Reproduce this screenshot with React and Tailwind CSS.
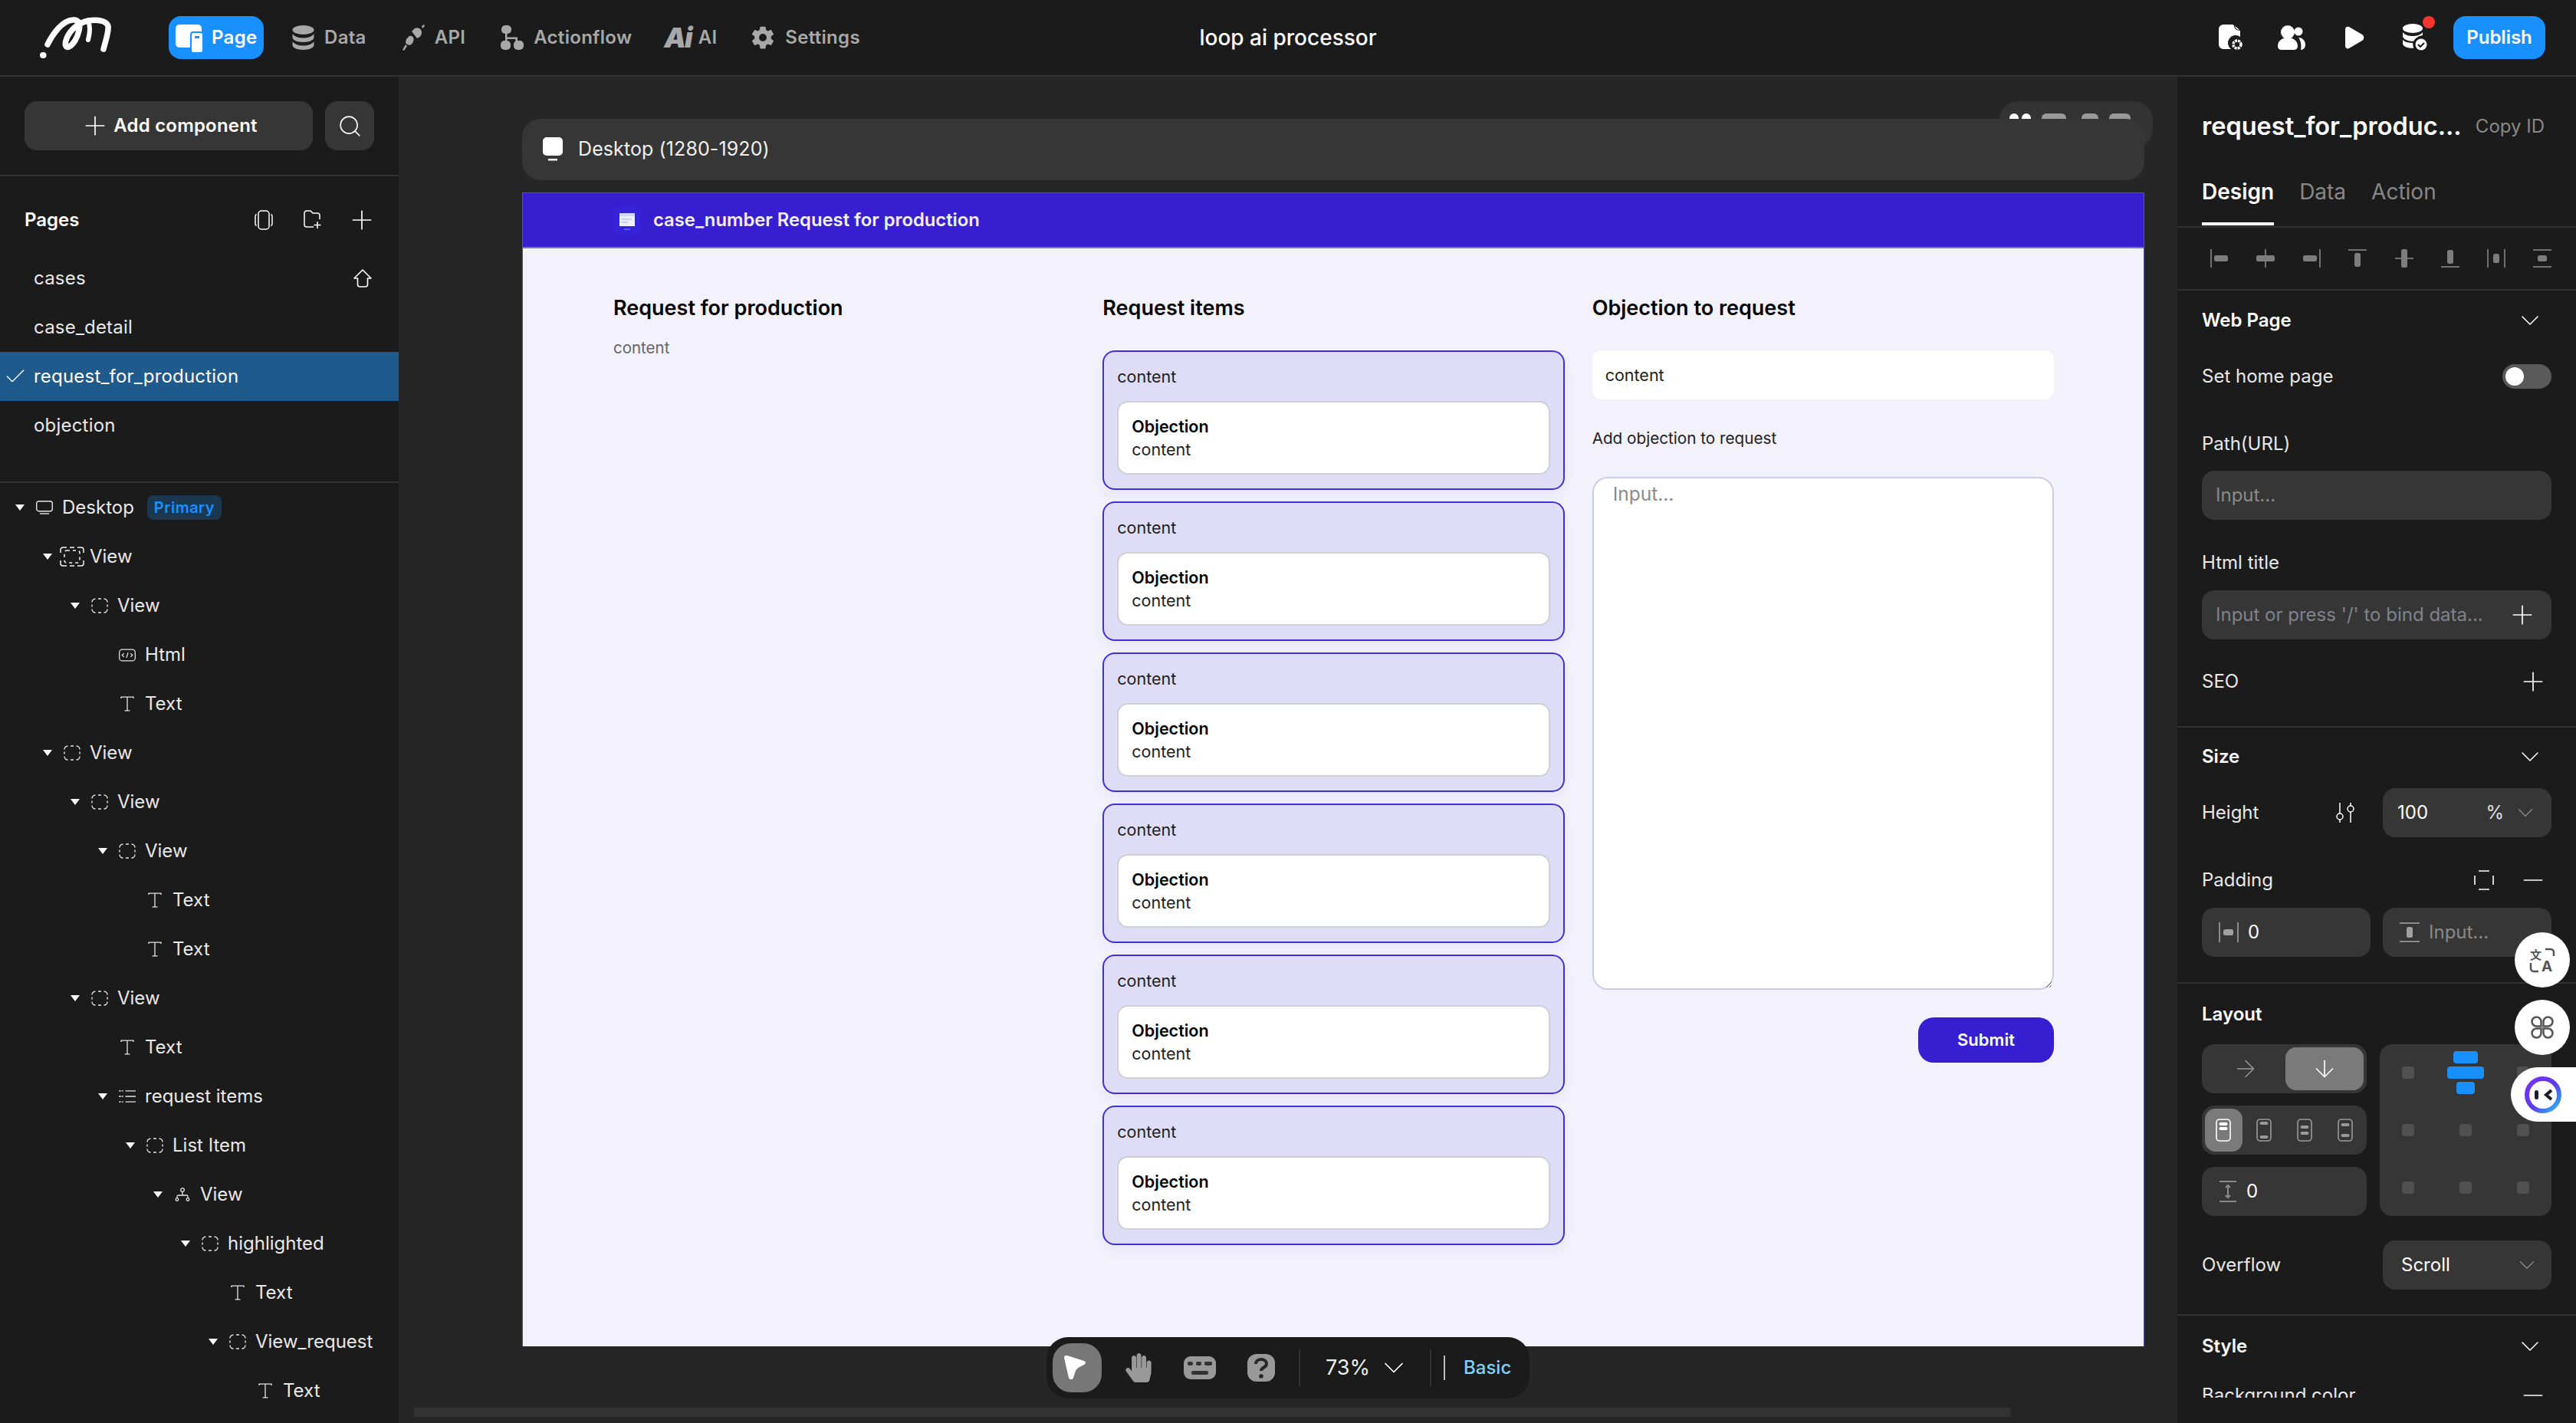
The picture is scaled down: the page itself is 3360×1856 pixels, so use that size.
import { Plus, Search, Check, ChevronDown, ArrowRight, ArrowDown, Minus } from 'lucide-react'
import { IoSettingsSharp } from 'react-icons/io5'
import { FaHandPaper } from 'react-icons/fa'

const pages = ['cases', 'case_detail', 'request_for_production', 'objection']

const tree = [
  { d: 0, icon: 'desktop', label: 'Desktop', arrow: true, badge: 'Primary' },
  { d: 1, icon: 'viewActive', label: 'View', arrow: true },
  { d: 2, icon: 'view', label: 'View', arrow: true },
  { d: 3, icon: 'html', label: 'Html' },
  { d: 3, icon: 'text', label: 'Text' },
  { d: 1, icon: 'view', label: 'View', arrow: true },
  { d: 2, icon: 'view', label: 'View', arrow: true },
  { d: 3, icon: 'view', label: 'View', arrow: true },
  { d: 4, icon: 'text', label: 'Text' },
  { d: 4, icon: 'text', label: 'Text' },
  { d: 2, icon: 'view', label: 'View', arrow: true },
  { d: 3, icon: 'text', label: 'Text' },
  { d: 3, icon: 'list', label: 'request items', arrow: true },
  { d: 4, icon: 'view', label: 'List Item', arrow: true },
  { d: 5, icon: 'branch', label: 'View', arrow: true },
  { d: 6, icon: 'view', label: 'highlighted', arrow: true },
  { d: 7, icon: 'text', label: 'Text' },
  { d: 7, icon: 'view', label: 'View_request', arrow: true },
  { d: 8, icon: 'text', label: 'Text' },
]

const TreeIcon = ({ type }) => {
  if (type === 'desktop')
    return (
      <svg width="22" height="18" viewBox="0 0 22 18" fill="none" stroke="#e5e5e5" strokeWidth="1.4">
        <rect x="0.7" y="0.7" width="20.6" height="13" rx="3" />
        <path d="M5 17h12" />
      </svg>
    )
  if (type === 'view')
    return (
      <svg width="22" height="20" viewBox="0 0 22 20" fill="none" stroke="#e5e5e5" strokeWidth="1.4">
        <path d="M1 5.5A4.5 4.5 0 0 1 5.5 1M9 1h4M16.5 1A4.5 4.5 0 0 1 21 5.5M21 8.5v3M21 14.5a4.5 4.5 0 0 1-4.5 4.5M13 19H9M5.5 19A4.5 4.5 0 0 1 1 14.5M1 11.5v-3" />
      </svg>
    )
  if (type === 'viewActive')
    return (
      <svg className="shrink-0" width="32" height="26" viewBox="0 0 32 26" fill="none" stroke="#f5f5f5" strokeWidth="1.5">
        <rect x="6" y="5" width="20" height="16" rx="3" strokeDasharray="4 4" />
        <path d="M1 8V4a3 3 0 0 1 3-3h5M23 1h5a3 3 0 0 1 3 3v4M31 18v4a3 3 0 0 1-3 3h-5M9 25H4a3 3 0 0 1-3-3v-4M13 1h6M13 25h6" />
      </svg>
    )
  if (type === 'html')
    return (
      <svg width="23" height="17" viewBox="0 0 23 17" fill="none" stroke="#e5e5e5" strokeWidth="1.3">
        <rect x="0.7" y="0.7" width="21.6" height="15.6" rx="4" />
        <path d="M7 6l-2.5 2.5L7 11M16 6l2.5 2.5L16 11M12.6 5l-2.2 7" />
      </svg>
    )
  if (type === 'text')
    return (
      <svg width="18" height="20" viewBox="0 0 18 20" fill="none" stroke="#e5e5e5" strokeWidth="1.3">
        <path d="M1 3V1.2h16V3M9 1.2v17.6M5.5 18.8h7" />
      </svg>
    )
  if (type === 'list')
    return (
      <svg width="23" height="18" viewBox="0 0 23 18" fill="none" stroke="#e5e5e5" strokeWidth="1.4">
        <path d="M0 1.5h6M0 9h6M0 16.5h6" strokeDasharray="3 1" />
        <path d="M9 1.5h14M9 9h14M9 16.5h14" />
      </svg>
    )
  return (
    <svg width="20" height="18" viewBox="0 0 20 18" fill="none" stroke="#e5e5e5" strokeWidth="1.3">
      <circle cx="10" cy="3" r="2.3" />
      <path d="M10 5.5V10M3 14v-2.5a1.5 1.5 0 0 1 1.5-1.5h11a1.5 1.5 0 0 1 1.5 1.5V14" />
      <circle cx="3" cy="15.5" r="1.8" />
      <circle cx="17" cy="15.5" r="1.8" />
    </svg>
  )
}

const TreeRow = ({ item }) => (
  <div className="flex h-16 items-center text-[24px] text-[#e8e8e8]" style={{ paddingLeft: 18 + item.d * 36 }}>
    <div className="flex w-4 justify-center">
      {item.arrow && <div className="h-0 w-0 border-x-[6px] border-t-[8px] border-x-transparent border-t-white" />}
    </div>
    <div className="ml-[13px] flex w-[22px] justify-center">
      <TreeIcon type={item.icon} />
    </div>
    <span className="ml-3">{item.label}</span>
    {item.badge && (
      <span className="ml-[17px] flex h-8 items-center rounded-lg bg-[#1c3850] px-[9px] text-[20px] font-semibold tracking-[0.5px] text-[#1890ff]">{item.badge}</span>
    )}
  </div>
)

const NavItem = ({ icon, label, className }) => (
  <div className={`flex items-center gap-[13px] text-[24px] font-semibold tracking-[0.3px] text-[#a8a8a8] ${className}`}>
    {icon}
    <span>{label}</span>
  </div>
)

const AlignIcon = ({ kind }) => {
  const bar = '#7d7d7d'
  const line = '#707070'
  const shapes = {
    left: [[2, 2, 2, 24], [7, 10, 18, 8]],
    hcenter: [[13, 2, 2, 24], [2, 10, 24, 8]],
    right: [[24, 2, 2, 24], [3, 10, 18, 8]],
    top: [[2, 2, 24, 2], [10, 7, 8, 18]],
    vcenter: [[2, 13, 24, 2], [10, 2, 8, 24]],
    bottom: [[2, 24, 24, 2], [10, 3, 8, 18]],
    hdist: [[2, 2, 2, 24], [24, 2, 2, 24], [10, 8, 8, 12]],
    vdist: [[2, 2, 24, 2], [2, 24, 24, 2], [8, 10, 12, 8]],
  }
  const list = shapes[kind]
  return (
    <svg width="28" height="28" viewBox="0 0 28 28">
      {list.map((r, i) => {
        const isBar = i === list.length - 1
        return <rect key={i} x={r[0]} y={r[1]} width={r[2]} height={r[3]} rx={isBar ? 2.5 : 0} fill={isBar ? bar : line} />
      })}
    </svg>
  )
}

const SectionHead = ({ title, height }) => (
  <div className={`flex items-center justify-between pr-2 ${height}`}>
    <span className="text-[24px] font-semibold text-white">{title}</span>
    <ChevronDown size={40} strokeWidth={0.9} />
  </div>
)

const Field = ({ children, className = '' }) => (
  <div className={`flex h-16 items-center rounded-2xl bg-[#363636] text-[24px] ${className}`}>{children}</div>
)

const JustifyIcon = ({ bars, active }) => {
  const c = active ? '#fff' : '#9a9a9a'
  return (
    <svg width="20" height="30" viewBox="0 0 20 30" fill="none">
      <rect x="1" y="1" width="18" height="28" rx="4" stroke={c} strokeWidth="1.6" />
      {bars.map((y) => (
        <rect key={y} x="4.5" y={y} width="11" height="4" rx="2" fill={c} />
      ))}
    </svg>
  )
}

const RequestCard = () => (
  <div className="h-[182px] rounded-2xl border-2 border-[#4030dc] bg-[#dfdcf7] px-[17px] shadow-[0_8px_16px_rgba(90,80,200,0.06)]">
    <p className="flex h-[64px] items-center text-[21.5px] text-[#222]">content</p>
    <div className="h-[96px] rounded-[14px] border-2 border-[#d0d0d4] bg-white px-[17px] pt-4 text-[21.5px] leading-[30px]">
      <p className="font-semibold text-black">Objection</p>
      <p className="text-[#222]">content</p>
    </div>
  </div>
)

const Logo = () => (
  <svg width="94" height="54" viewBox="0 0 94 54" fill="none" stroke="#fff" strokeLinecap="round" strokeLinejoin="round">
    <path d="M5 50h.5" strokeWidth="8" />
    <path d="M11 36C18 22 30 5 44 4c8-1 10 6 8 14-2 9-7 18-13 21-5 2-6-4-3-11 4-10 14-20 28-23 12-2 24 0 26 7 1 8-3 18-6 30" strokeWidth="7.5" />
    <path d="M64 6c3 6 2 16 0 24" strokeWidth="6" />
  </svg>
)

export default function App() {
  return (
    <div className="flex h-screen w-screen flex-col overflow-hidden bg-[#1b1b1b] font-['Inter',sans-serif] text-white">
      <header className="relative flex h-[100px] shrink-0 items-center border-b-2 border-[#333]">
        <div className="ml-[51px] w-[169px]">
          <Logo />
        </div>
        <div className="flex h-14 w-[124px] items-center gap-[11px] rounded-2xl bg-[#1890ff] pl-[9px] text-[24px] font-semibold tracking-[0.3px]">
          <svg width="36" height="40" viewBox="0 0 36 40" fill="#fff">
            <rect x="0" y="3" width="34" height="30" rx="5" />
            <rect x="20" y="13" width="16" height="27" rx="3" stroke="#1890ff" strokeWidth="2" />
            <rect x="25" y="18" width="6" height="3" fill="#1890ff" />
          </svg>
          <span>Page</span>
        </div>
        <NavItem
          className="ml-[37px]"
          label="Data"
          icon={
            <svg width="29" height="32" viewBox="0 0 29 32" fill="#a8a8a8">
              <ellipse cx="14.5" cy="6" rx="14" ry="6" />
              <path d="M.5 11c3 4 8 5.5 14 5.5S25.5 15 28.5 11v5c0 3-6 6-14 6S.5 19 .5 16zM.5 21c3 4 8 5.5 14 5.5s11-1.5 14-5.5v5c0 3-6 6-14 6s-14-3-14-6z" />
            </svg>
          }
        />
        <NavItem
          className="ml-[46px]"
          label="API"
          icon={
            <svg width="30" height="34" viewBox="0 0 30 34" fill="#a8a8a8">
              <path d="M15 7c3-4 8-3 10 0s1 8-3 10l-2 1-7-9zM26 2l3-2 1 2-3 3zM10 15c4-1 7 3 5 7-1 4-5 6-8 4l-2-2 1-5z" />
              <path d="M5 26l-4 7 2 1 4-6z" />
            </svg>
          }
        />
        <NavItem
          className="ml-[46px]"
          label="Actionflow"
          icon={
            <svg width="30" height="32" viewBox="0 0 30 32" fill="#a8a8a8">
              <rect x="1" y="0" width="13" height="11" rx="5" />
              <rect x="0" y="20" width="13" height="12" rx="5" />
              <rect x="17" y="20" width="13" height="12" rx="5" />
              <path d="M6 10h2.5v5.5H22V21h-2.5v-3H8.5v3H6z" />
            </svg>
          }
        />
        <div className="ml-[42px] flex items-center gap-[9px] text-[24px] font-semibold tracking-[0.3px] text-[#a8a8a8]">
          <span className="text-[36px] leading-none font-black tracking-[-2px] italic">Ai</span>
          <span>AI</span>
        </div>
        <NavItem className="ml-[44px]" label="Settings" icon={<IoSettingsSharp size={32} />} />
        <div className="absolute top-[35px] left-0 w-full text-center text-[28px] leading-7 font-medium">loop ai processor</div>
        <div className="ml-auto flex items-center pr-10">
          <svg width="32" height="34" viewBox="0 0 32 34" fill="#fff">
            <path d="M6 0h12l2 1c0 4 3 7 8 7v8a10 10 0 0 0-12 16H6a6 6 0 0 1-6-6V6a6 6 0 0 1 6-6z" />
            <path d="M21 2c2 1 4 3 6 5-3 0-5-2-6-5z" />
            <circle cx="24" cy="26" r="5" fill="none" stroke="#fff" strokeWidth="3.5" strokeDasharray="3 1" />
          </svg>
          <svg className="ml-[45px]" width="36" height="32" viewBox="0 0 36 32" fill="#fff">
            <circle cx="13" cy="9" r="9" />
            <circle cx="27" cy="8" r="5.5" />
            <path d="M0 27c0-7 6-11 13-11s13 4 13 11c0 3-2 5-5 5H5c-3 0-5-2-5-5zM27 16c5 0 9 4 9 9 0 4-2 7-6 7 1-6 0-12-3-16z" />
          </svg>
          <svg className="ml-[51px]" width="26" height="30" viewBox="0 0 26 30" fill="#fff">
            <path d="M1 4c0-3 3-4 5-3l17 10c3 2 3 6 0 8L6 29c-2 1-5 0-5-3z" />
          </svg>
          <div className="relative ml-[49px]">
            <svg width="34" height="36" viewBox="0 0 34 36" fill="#fff">
              <ellipse cx="14" cy="6" rx="13" ry="6" />
              <path d="M1 11c3 4 8 5 13 5s10-1 13-5v4c-6 1-10 4-12 8-7 0-14-3-14-7zM1 21c3 3 8 4 13 4l1 7c-8 0-14-3-14-6z" />
              <circle cx="25" cy="27" r="7.5" />
              <path d="M21 27l3 3 5-5" stroke="#1b1b1b" strokeWidth="2" fill="none" />
            </svg>
            <div className="absolute top-[-10px] left-[27px] h-4 w-4 rounded-full bg-[#f5352e]" />
          </div>
          <div className="ml-[33px] flex h-14 w-[120px] items-center justify-center rounded-2xl bg-[#1890ff] text-[24px] font-semibold">Publish</div>
        </div>
      </header>

      <div className="flex min-h-0 flex-1">
        {/* left panel */}
        <aside className="w-[520px] shrink-0 overflow-hidden">
          <div className="flex gap-4 border-b-2 border-[#333] p-8 pr-8">
            <div className="flex h-16 w-[376px] items-center justify-center gap-1 rounded-2xl bg-[#363636] text-[24px] font-semibold tracking-[0.2px]">
              <Plus size={40} strokeWidth={1} />
              <span>Add component</span>
            </div>
            <div className="flex h-16 w-16 items-center justify-center rounded-2xl bg-[#363636]">
              <Search size={33} strokeWidth={1.1} />
            </div>
          </div>
          <div className="border-b-2 border-[#333] pt-[25px] pb-[41px]">
            <div className="mb-3 flex h-16 items-center pr-4 pl-8">
              <span className="flex-1 text-[24px] font-semibold">Pages</span>
              <div className="flex w-16 justify-center">
                <svg width="24" height="26" viewBox="0 0 24 26" fill="none" stroke="#fff" strokeWidth="1.5">
                  <rect x="5" y="1" width="14" height="24" rx="4" />
                  <path d="M2.5 5.5a3 3 0 0 0-1.5 2.5v10a3 3 0 0 0 1.5 2.5M21.5 5.5a3 3 0 0 1 1.5 2.5v10a3 3 0 0 1-1.5 2.5" />
                </svg>
              </div>
              <div className="flex w-16 justify-center">
                <svg width="24" height="26" viewBox="0 0 24 26" fill="none" stroke="#fff" strokeWidth="1.5">
                  <path d="M13 22H4a3 3 0 0 1-3-3V4a3 3 0 0 1 3-3h5l3 3h6a3 3 0 0 1 3 3v5M18 15v9M13.5 19.5h9" />
                </svg>
              </div>
              <div className="flex w-16 justify-center">
                <Plus size={40} strokeWidth={1} />
              </div>
            </div>
            {pages.map((name, i) => (
              <div key={name} className={`flex h-16 items-center pr-[34px] text-[24px] tracking-[0.2px] ${i === 2 ? 'bg-[#1e5a8c]' : ''}`}>
                <div className="mr-1 flex w-10 justify-center">{i === 2 && <Check size={32} strokeWidth={1} />}</div>
                <span className={`flex-1 ${i === 2 ? 'text-white' : 'text-[#e8e8e8]'}`}>{name}</span>
                {i === 0 && (
                  <svg width="26" height="26" viewBox="0 0 26 26" fill="none" stroke="#fff" strokeWidth="1.6">
                    <path d="M13 2L2 13h4.5v8a3 3 0 0 0 3 3h7a3 3 0 0 0 3-3v-8H24z" strokeLinejoin="round" />
                  </svg>
                )}
              </div>
            ))}
          </div>
          {tree.map((item, i) => (
            <TreeRow key={i} item={item} />
          ))}
        </aside>

        {/* canvas */}
        <main className="relative flex-1 overflow-hidden bg-[#262626] pt-[55px] pl-[161px]">
          <div className="absolute top-[32px] left-[2088px] flex h-[61px] w-[200px] gap-[14px] rounded-3xl bg-[#333] pt-[16px] pl-[13px]">
            <div className="flex gap-[4px]">
              <div className="h-6 w-[12px] rounded-full bg-white" />
              <div className="h-6 w-[12px] rounded-full bg-white" />
            </div>
            <div className="h-6 w-[32px] rounded-md bg-[#999]" />
            <div className="ml-[6px] h-6 w-[22px] rounded-md bg-[#999]" />
            <div className="h-6 w-[28px] rounded-md bg-[#999]" />
          </div>
          <div className="relative flex h-20 w-[2116px] items-center gap-5 rounded-3xl bg-[#363636] pl-[27px] text-[25px] tracking-[0.1px] text-[#f0f0f0]">
            <svg width="26" height="32" viewBox="0 0 26 32" fill="#fff">
              <rect width="26" height="24" rx="5" />
              <rect x="7" y="28" width="12" height="2.5" />
            </svg>
            <span>Desktop (1280-1920)</span>
          </div>
          <div className="mt-4 flex h-[1505px] w-[2116px] flex-col border-x border-t border-[#55559a]">
            <div className="flex h-[72px] shrink-0 items-center gap-[17px] border-b-2 border-[#7a6ce8] bg-[#371fd1] pl-[118px]">
              <div className="flex h-[35px] w-[35px] items-start justify-center rounded bg-[#3522d9] pt-2">
                <svg width="20" height="22" viewBox="0 0 20 22">
                  <rect width="20" height="17" fill="#eef0ff" />
                  <rect width="20" height="4" fill="#cfd6ff" />
                  <rect x="2" y="7" width="14" height="1.5" fill="#b9c6f5" />
                  <rect x="2" y="11" width="9" height="1.5" fill="#b9c6f5" />
                  <rect x="6" y="20.5" width="8" height="1.5" fill="#3a7bf0" />
                </svg>
              </div>
              <span className="text-[23.8px] font-semibold text-[#f2f0ff]">case_number Request for production</span>
            </div>
            <div className="grid flex-1 grid-cols-3 items-start gap-[36px] bg-[#f3f1fc] pt-[58px] pr-[117px] pl-[118px]">
              <div>
                <h2 className="flex h-10 items-center text-[27px] font-semibold text-black">Request for production</h2>
                <p className="mt-5 flex h-6 items-center text-[20.5px] text-[#666]">content</p>
              </div>
              <div>
                <h2 className="flex h-10 items-center text-[27px] font-semibold text-black">Request items</h2>
                <div className="mt-[35px] flex flex-col gap-[15px]">
                  {[0, 1, 2, 3, 4, 5].map((i) => (
                    <RequestCard key={i} />
                  ))}
                </div>
              </div>
              <div className="flex flex-col">
                <h2 className="flex h-10 items-center text-[27px] font-semibold text-black">Objection to request</h2>
                <div className="mt-[35px] flex h-16 items-center rounded-xl bg-white pl-[17px] text-[21.5px] text-[#222]">content</div>
                <p className="mt-[38px] flex h-[26px] items-center text-[20.7px] text-[#222]">Add objection to request</p>
                <textarea
                  readOnly
                  placeholder="Input..."
                  className="mt-[37px] h-[669px] w-full rounded-[20px] border-2 border-[#c9cde8] bg-white px-[25px] py-0.5 text-[24.5px] outline-none placeholder:text-[#8a8a8a]"
                />
                <div className="mt-9 flex h-[59px] w-[177px] items-center justify-center self-end rounded-[20px] bg-[#371fd1] text-[22px] font-semibold text-white">Submit</div>
              </div>
            </div>
          </div>

          {/* bottom tool bar */}
          <div className="absolute top-[1644px] left-[845px] flex h-20 w-[630px] items-center rounded-[28px] bg-[#1b1b1b] pl-2">
            <div className="flex h-16 w-16 items-center justify-center rounded-3xl bg-[#777]">
              <svg width="38" height="38" viewBox="0 0 38 38" fill="#fff">
                <path d="M4 3c-1 0-2 1-2 3l6 26c1 3 5 3 6 0l3-9c1-2 2-3 5-5l6-3c3-2 2-4 0-5L6 3z" />
              </svg>
            </div>
            <FaHandPaper size={38} className="ml-[29px] text-[#999]" />
            <svg className="ml-10" width="42" height="30" viewBox="0 0 42 30" fill="#999">
              <rect width="42" height="30" rx="9" />
              <rect x="5" y="7" width="7" height="5" rx="2" fill="#333" />
              <rect x="16" y="7" width="7" height="5" rx="2" fill="#333" />
              <rect x="27" y="7" width="10" height="5" rx="2" fill="#333" />
              <rect x="10" y="19" width="22" height="5" rx="2" fill="#333" />
            </svg>
            <svg className="ml-[41px]" width="36" height="36" viewBox="0 0 36 36" fill="#999">
              <rect width="36" height="36" rx="12" />
              <path d="M11 13c0-8 14-8 14 0 0 5-7 4-7 9" fill="none" stroke="#262626" strokeWidth="4" />
              <circle cx="18" cy="29" r="2.8" fill="#262626" />
            </svg>
            <div className="ml-[31px] h-12 w-[2px] bg-[#333]" />
            <span className="ml-[33px] text-[27px] text-[#f0f0f0]">73%</span>
            <ChevronDown size={44} strokeWidth={0.9} className="ml-[9px]" />
            <div className="ml-[25px] h-12 w-[2px] bg-[#333]" />
            <div className="ml-4 h-8 w-[2px] bg-[#bbb]" />
            <span className="ml-6 text-[24px] font-medium text-[#7dd3fc]">Basic</span>
          </div>
          <div className="absolute top-[1736px] left-5 h-3 w-[2083px] rounded bg-[#333]" />
        </main>

        {/* right panel */}
        <aside className="relative flex w-[520px] shrink-0 flex-col pb-[33px]">
          <div className="min-h-0 flex-1 overflow-hidden">
            <div className="flex h-[130px] items-center justify-between pr-[41px] pl-8">
              <span className="text-[32.5px] font-semibold">request_for_produc...</span>
              <span className="text-[24px] text-[#888]">Copy ID</span>
            </div>
            <div className="flex h-[67px] items-start gap-[33px] border-b-2 border-[#333] pl-8 text-[28px]">
              <span className="h-16 border-b-4 border-white leading-10 font-semibold">Design</span>
              <span className="leading-10 text-[#888]">Data</span>
              <span className="leading-10 text-[#888]">Action</span>
            </div>
            <div className="flex h-[82px] items-center justify-between border-b-2 border-[#333] pr-[30px] pl-[41px]">
              {['left', 'hcenter', 'right', 'top', 'vcenter', 'bottom', 'hdist', 'vdist'].map((k) => (
                <AlignIcon key={k} kind={k} />
              ))}
            </div>

            <section className="h-[570px] border-b-2 border-[#333] px-8">
              <SectionHead title="Web Page" height="h-[78px]" />
              <div className="mt-[2px] flex h-[64px] items-center justify-between">
                <span className="text-[24px] text-[#e8e8e8]">Set home page</span>
                <div className="flex h-8 w-16 items-center rounded-full bg-[#5a5a5a] pl-1">
                  <div className="h-6 w-6 rounded-full bg-white" />
                </div>
              </div>
              <p className="mt-9 flex h-10 items-center text-[24px] text-[#e8e8e8]">Path(URL)</p>
              <Field className="mt-[15px] pl-[18px] text-[#8a8a8a]">Input...</Field>
              <p className="mt-9 flex h-10 items-center text-[24px] text-[#e8e8e8]">Html title</p>
              <Field className="mt-4 justify-between pr-[18px] pl-[18px] text-[#80828c]">
                <span>Input or press '/' to bind data...</span>
                <Plus size={40} strokeWidth={1} className="text-white" />
              </Field>
              <div className="mt-[23px] flex h-16 items-center justify-between pr-1">
                <span className="text-[24px] text-[#e8e8e8]">SEO</span>
                <Plus size={40} strokeWidth={1} />
              </div>
            </section>

            <section className="h-[334px] border-b-2 border-[#333] px-8">
              <SectionHead title="Size" height="h-[76px]" />
              <div className="mt-[3px] flex h-16 items-center">
                <span className="flex-1 text-[24px] text-[#e8e8e8]">Height</span>
                <svg className="mr-[36px]" width="26" height="26" viewBox="0 0 26 26" fill="none" stroke="#fff" strokeWidth="1.5">
                  <path d="M6 0v14M6 22v4M20 0v4M20 12v14" />
                  <circle cx="6" cy="18" r="4" />
                  <circle cx="20" cy="8" r="4" />
                </svg>
                <Field className="w-[220px] pl-[19px]">
                  <span className="flex-1">100</span>
                  <span className="text-[#e0e0e0]">%</span>
                  <ChevronDown size={34} strokeWidth={1} className="mr-[17px] ml-[11px] text-[#888]" />
                </Field>
              </div>
              <div className="mt-9 flex h-10 items-center pr-1">
                <span className="flex-1 text-[24px] text-[#e8e8e8]">Padding</span>
                <svg className="mr-[31px]" width="26" height="26" viewBox="0 0 26 26" stroke="#fff" strokeWidth="1.6" fill="none">
                  <path d="M6 1h14M6 25h14M1 7v12M25 7v12" />
                </svg>
                <Minus size={40} strokeWidth={1} />
              </div>
              <div className="mt-4 grid grid-cols-2 gap-4">
                <Field className="gap-[12px] pl-[22px]">
                  <svg width="26" height="26" viewBox="0 0 26 26">
                    <rect x="0" y="0" width="2" height="26" fill="#8a8a8a" />
                    <rect x="24" y="0" width="2" height="26" fill="#8a8a8a" />
                    <rect x="6" y="9" width="13" height="8" rx="2.5" fill="#a0a0a0" />
                  </svg>
                  <span>0</span>
                </Field>
                <Field className="gap-[12px] pl-[22px] text-[#8a8a8a]">
                  <svg width="26" height="26" viewBox="0 0 26 26">
                    <rect x="0" y="0" width="26" height="2" fill="#8a8a8a" />
                    <rect x="0" y="24" width="26" height="2" fill="#8a8a8a" />
                    <rect x="9" y="6" width="8" height="14" rx="2.5" fill="#a0a0a0" />
                  </svg>
                  <span>Input...</span>
                </Field>
              </div>
            </section>

            <section className="h-[433px] border-b-2 border-[#333] px-8">
              <div className="flex h-[79px] items-center text-[24px] font-semibold">Layout</div>
              <div className="flex gap-[17px]">
                <div className="flex w-[215px] flex-col gap-4">
                  <div className="flex h-16 items-center rounded-2xl bg-[#363636] p-1">
                    <div className="flex flex-1 justify-center">
                      <ArrowRight size={36} strokeWidth={1} className="text-[#999]" />
                    </div>
                    <div className="flex h-14 w-[102px] items-center justify-center rounded-[14px] bg-[#7a7a7a]">
                      <ArrowDown size={36} strokeWidth={1.1} />
                    </div>
                  </div>
                  <div className="flex h-16 items-center gap-[4px] rounded-2xl bg-[#363636] p-1">
                    <div className="flex h-14 w-[49px] items-center justify-center rounded-[14px] bg-[#7a7a7a]">
                      <JustifyIcon bars={[5, 11]} active />
                    </div>
                    <div className="flex w-[49px] justify-center">
                      <JustifyIcon bars={[4, 22]} />
                    </div>
                    <div className="flex w-[49px] justify-center">
                      <JustifyIcon bars={[9, 17]} />
                    </div>
                    <div className="flex w-[49px] justify-center">
                      <JustifyIcon bars={[6, 20]} />
                    </div>
                  </div>
                  <div className="flex h-16 items-center gap-[13px] rounded-2xl bg-[#363636] pl-[23px] text-[24px]">
                    <svg width="22" height="28" viewBox="0 0 22 28" fill="none" stroke="#8a8a8a" strokeWidth="2">
                      <path d="M0 1h22M0 27h22M11 6v16M8 9l3-3 3 3M8 19l3 3 3-3" />
                    </svg>
                    <span>0</span>
                  </div>
                </div>
                <div className="grid h-[224px] w-[224px] grid-cols-3 grid-rows-3 rounded-2xl bg-[#363636]">
                  {[0, 1, 2, 3, 4, 5, 6, 7, 8].map((i) => (
                    <div key={i} className="flex items-center justify-center">
                      {i === 1 ? (
                        <div className="flex flex-col items-center gap-1">
                          <div className="h-4 w-8 rounded bg-[#1890ff]" />
                          <div className="h-4 w-12 rounded bg-[#1890ff]" />
                          <div className="h-4 w-6 rounded bg-[#1890ff]" />
                        </div>
                      ) : (
                        <div className="h-4 w-4 rounded bg-[#505050]" />
                      )}
                    </div>
                  ))}
                </div>
              </div>
              <div className="mt-8 flex items-center">
                <span className="flex-1 text-[24px] text-[#e8e8e8]">Overflow</span>
                <Field className="w-[220px] justify-between pr-[15px] pl-6">
                  <span>Scroll</span>
                  <ChevronDown size={34} strokeWidth={1} className="text-[#888]" />
                </Field>
              </div>
            </section>

            <section className="px-8">
              <SectionHead title="Style" height="h-20" />
              <div className="mt-1 flex h-10 items-center justify-between pr-1">
                <span className="text-[24px] text-[#e8e8e8]">Background color</span>
                <Minus size={40} strokeWidth={1} />
              </div>
            </section>
          </div>

          {/* floating helpers */}
          <div className="absolute top-[1116px] left-[440px] flex h-[72px] w-[72px] items-center justify-center rounded-full bg-white">
            <svg className="overflow-visible" width="32" height="32" viewBox="0 0 32 32" fill="none">
              <text x="0" y="15" fontSize="15" fontWeight="700" fill="#555" fontFamily="Noto Sans CJK SC, sans-serif">文</text>
              <text x="15" y="31" fontSize="19" fontWeight="700" fill="#555" fontFamily="Inter, sans-serif">A</text>
              <path d="M20 2h7a4 4 0 0 1 4 4v5" stroke="#555" strokeWidth="2.5" />
              <path d="M1 20v7a4 4 0 0 0 4 4h6" stroke="#555" strokeWidth="2.5" />
            </svg>
          </div>
          <div className="absolute top-[1204px] left-[440px] flex h-[72px] w-[72px] items-center justify-center rounded-full bg-white">
            <svg width="30" height="30" viewBox="0 0 30 30" fill="none" stroke="#555" strokeWidth="2.5">
              <path d="M13.5 13.5H7.5a6 6 0 1 1 6-6zM16.5 13.5v-6a6 6 0 1 1 6 6zM13.5 16.5v6a6 6 0 1 1-6-6zM16.5 16.5h6a6 6 0 1 1-6 6z" />
            </svg>
          </div>
          <div className="absolute top-[1292px] left-[435px] flex h-[71px] w-[85px] items-center rounded-l-full bg-white pl-[18px]">
            <svg width="48" height="48" viewBox="0 0 48 48" fill="none">
              <defs>
                <linearGradient id="ring" x1="0" y1="0" x2="1" y2="1">
                  <stop offset="0" stopColor="#7b2ff7" />
                  <stop offset="0.55" stopColor="#5b3df0" />
                  <stop offset="1" stopColor="#22c5e8" />
                </linearGradient>
              </defs>
              <circle cx="24" cy="24" r="21" stroke="url(#ring)" strokeWidth="6" />
              <rect x="13" y="18" width="5" height="12" rx="2.5" fill="#1b1b2b" />
              <path d="M35 18l-7 6 7 6" stroke="#1b1b2b" strokeWidth="4" />
            </svg>
          </div>
        </aside>
      </div>
    </div>
  )
}
